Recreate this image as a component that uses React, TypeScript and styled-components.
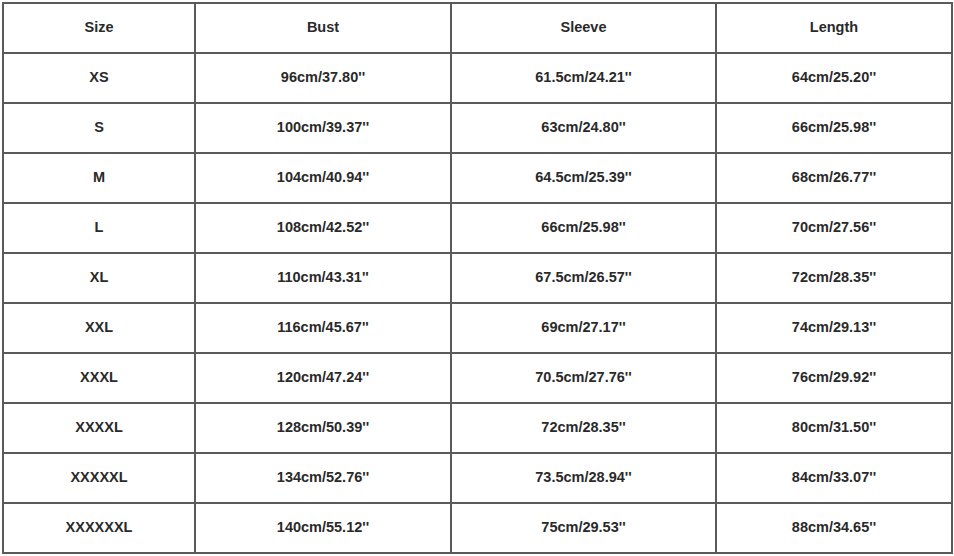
import { createGlobalStyle, styled } from "styled-components";

const GlobalStyle = createGlobalStyle`
  body {
    margin: 0;
    background: #ffffff;
    font-family: "Liberation Sans", Arial, sans-serif;
  }
`;

const Page = styled.div`
  padding: 2px 0 0 2px;
`;

const Table = styled.table`
  width: 949px;
  border-collapse: collapse;
  table-layout: fixed;
  color: #2a2a2a;
  font-size: 14.5px;
  font-weight: 700;
`;

const Cell = styled.td<{ $w?: number }>`
  width: ${(p) => (p.$w ? `${p.$w}px` : "auto")};
  height: 50px;
  padding: 0 0 2px;
  text-align: center;
  vertical-align: middle;
  border: 2px solid #5a5a5a;
  box-sizing: border-box;
`;

const widths = [192, 256, 265, 236];

const header = ["Size", "Bust", "Sleeve", "Length"];

const rows = [
  ["XS", "96cm/37.80''", "61.5cm/24.21''", "64cm/25.20''"],
  ["S", "100cm/39.37''", "63cm/24.80''", "66cm/25.98''"],
  ["M", "104cm/40.94''", "64.5cm/25.39''", "68cm/26.77''"],
  ["L", "108cm/42.52''", "66cm/25.98''", "70cm/27.56''"],
  ["XL", "110cm/43.31''", "67.5cm/26.57''", "72cm/28.35''"],
  ["XXL", "116cm/45.67''", "69cm/27.17''", "74cm/29.13''"],
  ["XXXL", "120cm/47.24''", "70.5cm/27.76''", "76cm/29.92''"],
  ["XXXXL", "128cm/50.39''", "72cm/28.35''", "80cm/31.50''"],
  ["XXXXXL", "134cm/52.76''", "73.5cm/28.94''", "84cm/33.07''"],
  ["XXXXXXL", "140cm/55.12''", "75cm/29.53''", "88cm/34.65''"],
];

function App() {
  return (
    <Page>
      <GlobalStyle />
      <Table>
        <tbody>
          <tr>
            {header.map((h, i) => (
              <Cell key={h} $w={widths[i]}>
                {h}
              </Cell>
            ))}
          </tr>
          {rows.map((r) => (
            <tr key={r[0]}>
              {r.map((c, i) => (
                <Cell key={i}>{c}</Cell>
              ))}
            </tr>
          ))}
        </tbody>
      </Table>
    </Page>
  );
}

export default App;
